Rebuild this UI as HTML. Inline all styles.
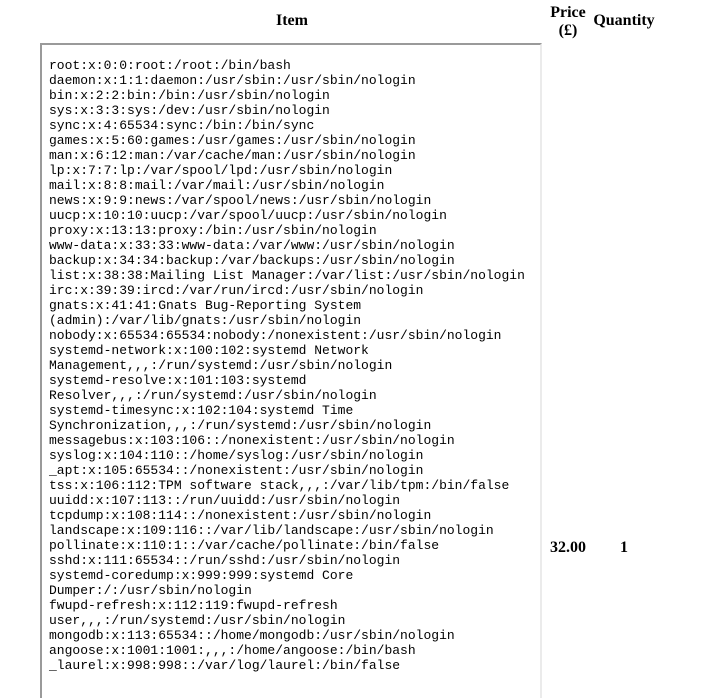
<!DOCTYPE html>
<html><head><meta charset="utf-8"><style>
html,body{margin:0;padding:0;background:#fff;width:708px;height:698px;overflow:hidden;position:relative}
.h{position:absolute;font-family:"Liberation Serif",serif;font-weight:bold;font-size:16px;color:#000;text-align:center;line-height:18px}
.box{position:absolute;left:40px;top:43px;width:498px;height:653px;border:2px solid #ebebeb;border-bottom:none;border-top-color:#9a9a9a;border-left-color:#9a9a9a;border-right-color:#ebebeb}
pre{position:absolute;left:49px;top:58px;margin:0;font-family:"Liberation Mono",monospace;font-size:13px;line-height:15px;color:#000}
</style></head><body>
<div class="h" style="left:250px;top:12px;width:84px">Item</div>
<div class="h" style="left:540px;top:4px;width:56px">Price<br>(£)</div>
<div class="h" style="left:590px;top:12px;width:68px">Quantity</div>
<div class="box"></div>
<pre>root:x:0:0:root:/root:/bin/bash
daemon:x:1:1:daemon:/usr/sbin:/usr/sbin/nologin
bin:x:2:2:bin:/bin:/usr/sbin/nologin
sys:x:3:3:sys:/dev:/usr/sbin/nologin
sync:x:4:65534:sync:/bin:/bin/sync
games:x:5:60:games:/usr/games:/usr/sbin/nologin
man:x:6:12:man:/var/cache/man:/usr/sbin/nologin
lp:x:7:7:lp:/var/spool/lpd:/usr/sbin/nologin
mail:x:8:8:mail:/var/mail:/usr/sbin/nologin
news:x:9:9:news:/var/spool/news:/usr/sbin/nologin
uucp:x:10:10:uucp:/var/spool/uucp:/usr/sbin/nologin
proxy:x:13:13:proxy:/bin:/usr/sbin/nologin
www-data:x:33:33:www-data:/var/www:/usr/sbin/nologin
backup:x:34:34:backup:/var/backups:/usr/sbin/nologin
list:x:38:38:Mailing List Manager:/var/list:/usr/sbin/nologin
irc:x:39:39:ircd:/var/run/ircd:/usr/sbin/nologin
gnats:x:41:41:Gnats Bug-Reporting System
(admin):/var/lib/gnats:/usr/sbin/nologin
nobody:x:65534:65534:nobody:/nonexistent:/usr/sbin/nologin
systemd-network:x:100:102:systemd Network
Management,,,:/run/systemd:/usr/sbin/nologin
systemd-resolve:x:101:103:systemd
Resolver,,,:/run/systemd:/usr/sbin/nologin
systemd-timesync:x:102:104:systemd Time
Synchronization,,,:/run/systemd:/usr/sbin/nologin
messagebus:x:103:106::/nonexistent:/usr/sbin/nologin
syslog:x:104:110::/home/syslog:/usr/sbin/nologin
_apt:x:105:65534::/nonexistent:/usr/sbin/nologin
tss:x:106:112:TPM software stack,,,:/var/lib/tpm:/bin/false
uuidd:x:107:113::/run/uuidd:/usr/sbin/nologin
tcpdump:x:108:114::/nonexistent:/usr/sbin/nologin
landscape:x:109:116::/var/lib/landscape:/usr/sbin/nologin
pollinate:x:110:1::/var/cache/pollinate:/bin/false
sshd:x:111:65534::/run/sshd:/usr/sbin/nologin
systemd-coredump:x:999:999:systemd Core
Dumper:/:/usr/sbin/nologin
fwupd-refresh:x:112:119:fwupd-refresh
user,,,:/run/systemd:/usr/sbin/nologin
mongodb:x:113:65534::/home/mongodb:/usr/sbin/nologin
angoose:x:1001:1001:,,,:/home/angoose:/bin/bash
_laurel:x:998:998::/var/log/laurel:/bin/false</pre>
<div class="h" style="left:545px;top:539px;width:46px">32.00</div>
<div class="h" style="left:614px;top:539px;width:20px">1</div>
</body></html>
